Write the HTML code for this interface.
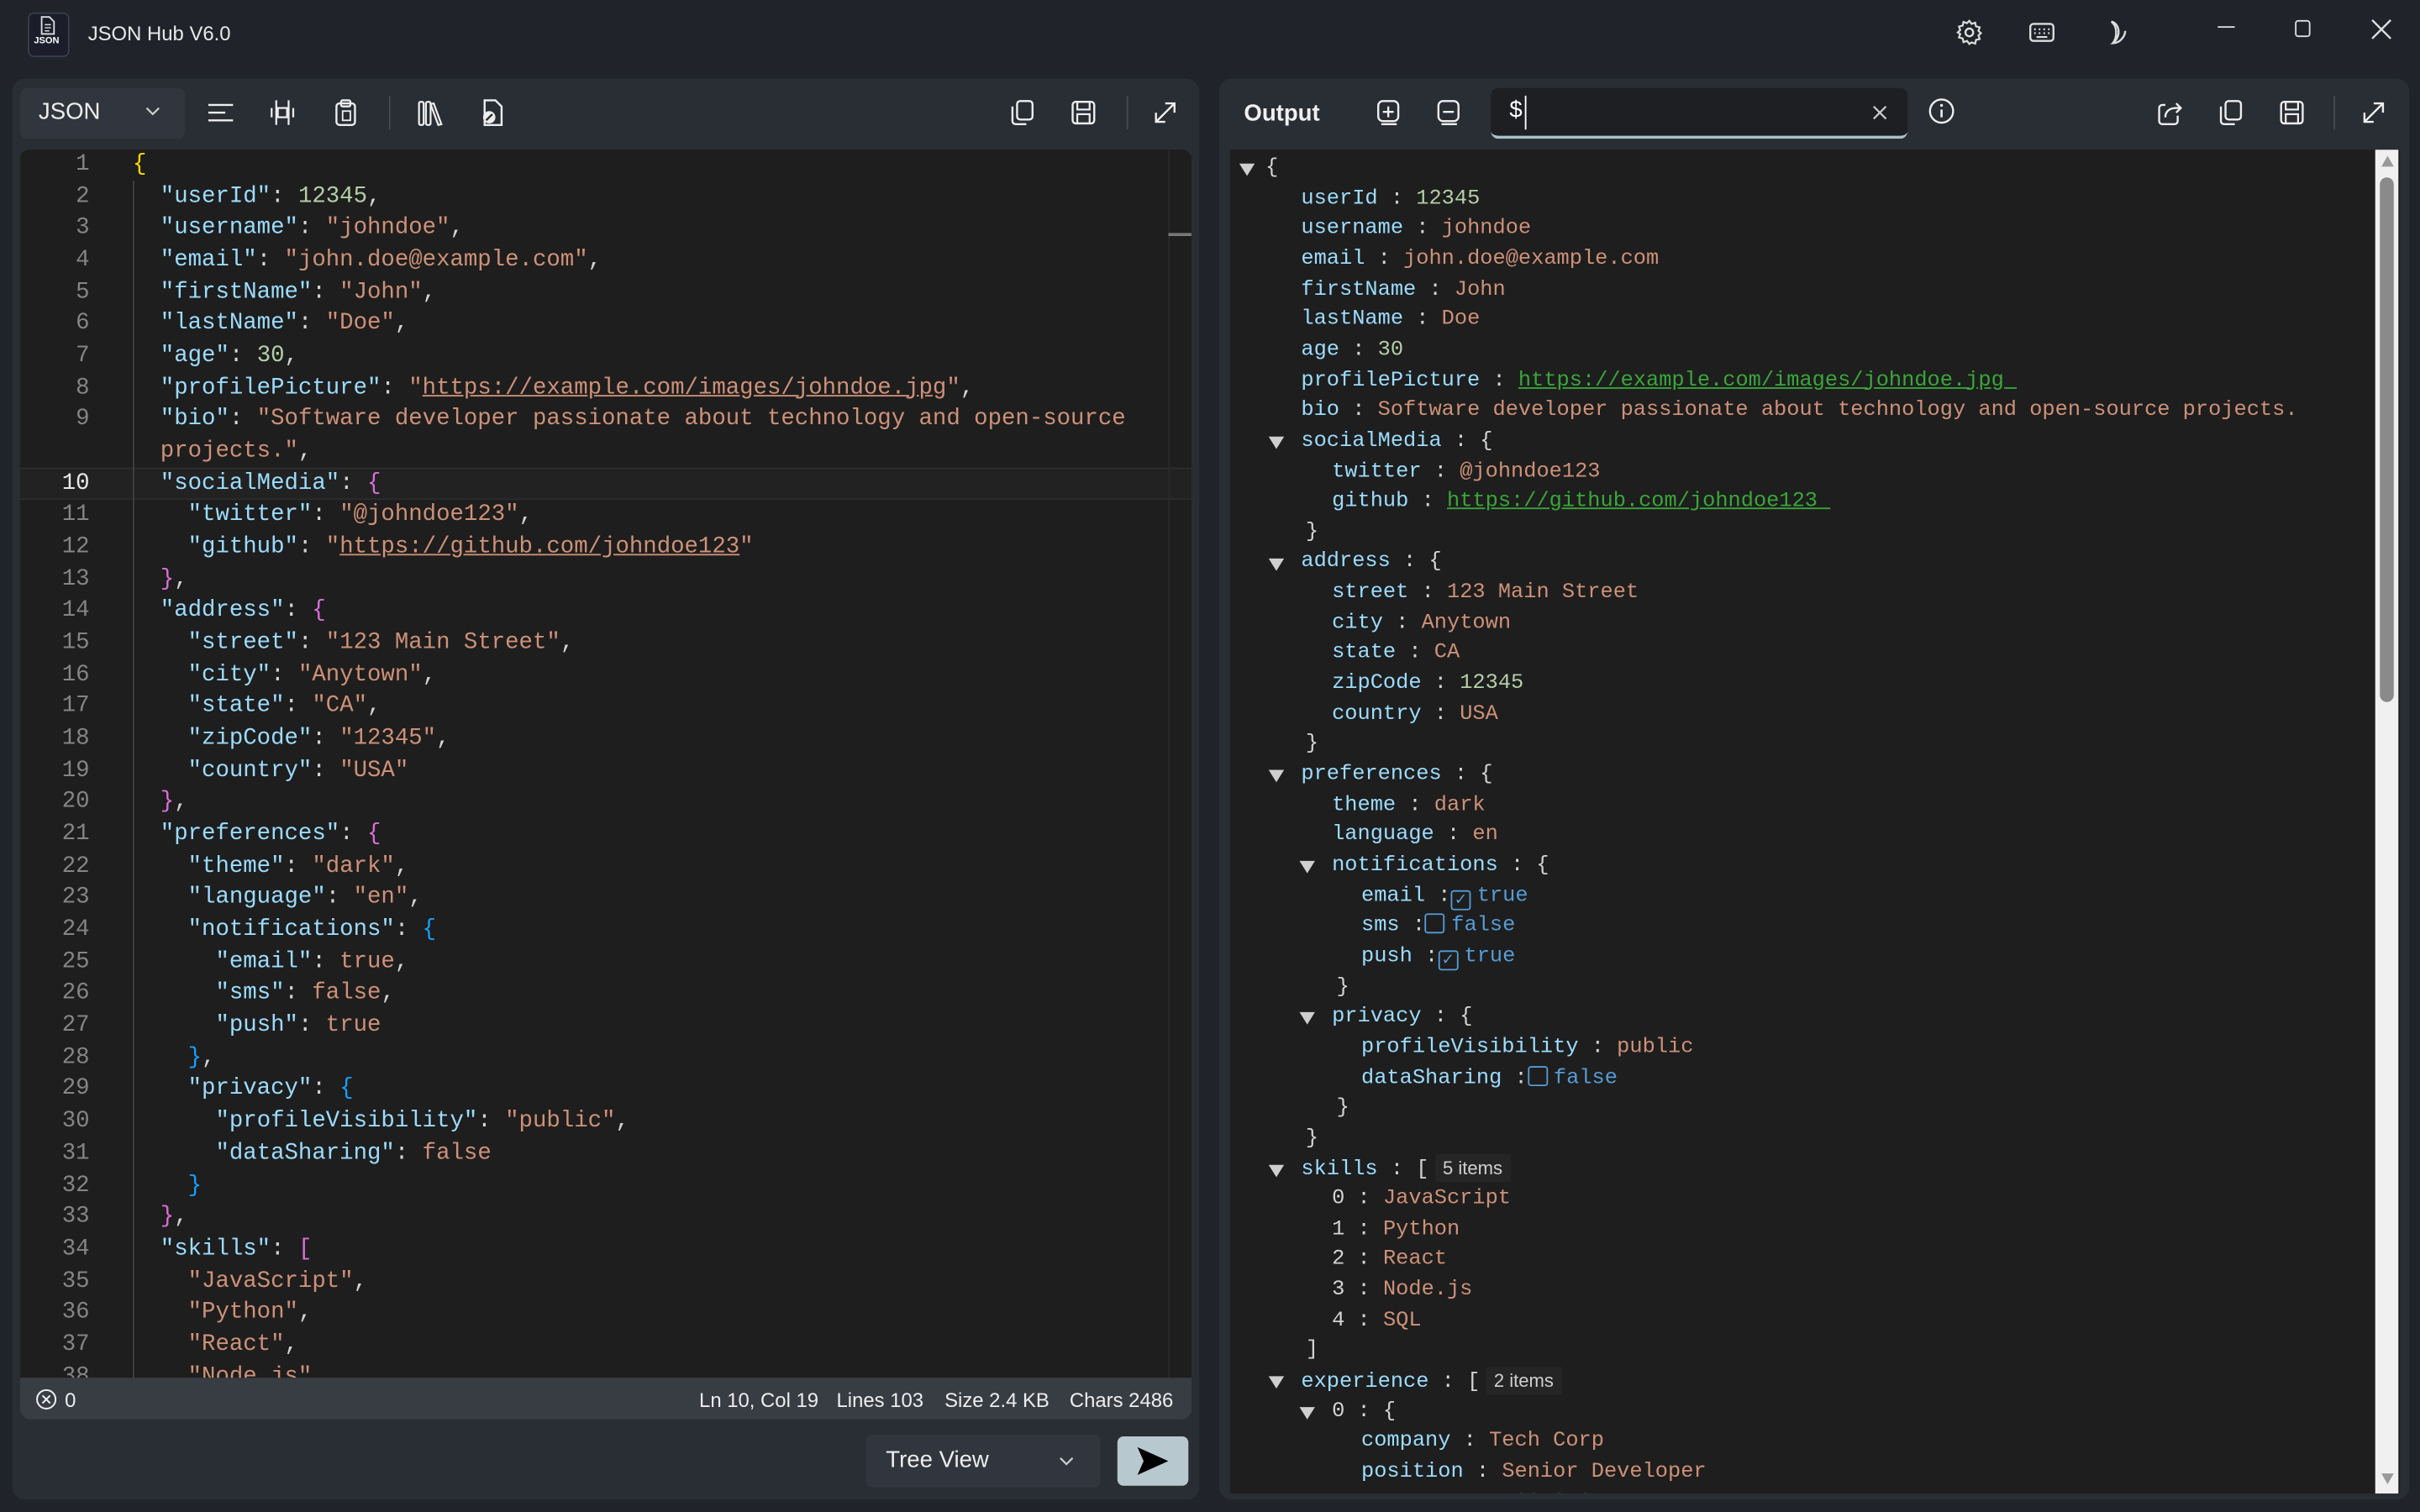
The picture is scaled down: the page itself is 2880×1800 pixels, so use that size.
<!DOCTYPE html>
<html><head><meta charset="utf-8">
<style>
html,body{margin:0;padding:0;background:#20242a;overflow:hidden;width:2880px;height:1800px}
#root{position:absolute;left:0;top:0;width:1568px;height:980px;transform:scale(1.836735);transform-origin:0 0;background:#20242a;font-family:"Liberation Sans",sans-serif;color:#e6e6e6}
.abs{position:absolute}
.ic{position:absolute;width:18px;height:18px}
.ic svg{width:18px;height:18px;display:block}
.panel{position:absolute;background:#292d34;border-radius:8px}
.code{position:absolute;left:13px;top:97px;width:759px;height:796px;background:#1e1e1e;overflow:hidden;border-radius:6px 6px 0 0}
.gut{position:absolute;left:0;top:0;width:45px;text-align:right;font-family:"Liberation Mono",monospace;font-size:14.9px;color:#858585}
.gut div,.src div{height:20.68px;line-height:20.68px;white-space:pre}
.src{position:absolute;left:73px;top:0;font-family:"Liberation Mono",monospace;font-size:14.9px;color:#d4d4d4}
.k{color:#9cdcfe}.s{color:#ce9178}.n{color:#b5cea8}.y{color:#ffd700}.m{color:#da70d6}.bl{color:#179fff}.u{text-decoration:underline}
.tree{position:absolute;left:797px;top:97px;width:758px;height:871px;background:#1e1e1e;overflow:hidden;font-family:"Liberation Mono",monospace;font-size:13.8px;color:#d4d4d4}
.tree .r{position:absolute;height:19.65px;line-height:19.65px;white-space:pre;margin-top:2px}
.tri{position:absolute;width:0;height:0;border-left:5px solid transparent;border-right:5px solid transparent;border-top:8px solid #cfcfcf;top:6px;margin-top:2px}
.tb{color:#569cd6}.tl{color:#3aa63a;text-decoration:underline}
.cb{display:inline-block;width:11px;height:11px;border:1.6px solid #569cd6;border-radius:2px;vertical-align:-2px;margin:0 4px 0 0;position:relative;font-size:10px;line-height:11px;text-align:center;color:#569cd6;font-family:"DejaVu Sans",sans-serif}
.badge{display:inline-block;background:#252525;font-family:"Liberation Sans",sans-serif;font-size:12px;padding:0 5px;margin-left:4px;line-height:18px;color:#d0d0d0}
</style></head><body><div id="root">

<div class="abs" style="left:18px;top:8px;width:25px;height:27px;background:#1b1d2b;border-radius:4px;border:1px solid #3a3d4a"></div>
<svg class="abs" style="left:22px;top:10px" width="17" height="13" viewBox="0 0 17 13"><path d="M5 1h5l3 3v8H5z" fill="none" stroke="#ddd" stroke-width="1"/><path d="M7 6h4M7 8h4M7 10h3" stroke="#ddd" stroke-width="0.8"/></svg>
<div class="abs" style="left:22px;top:24px;font-size:6px;color:#fff;font-weight:bold">JSON</div>
<div class="abs" style="left:57px;top:14px;font-size:13px;color:#e8e8e8">JSON Hub V6.0</div>

<div class="ic" style="left:1267px;top:12px"><svg viewBox="0 0 18 18"><circle cx="9" cy="9" r="2.5" fill="none" stroke="#ddd" stroke-width="1.3"/><path d="M9 1.5l1.5 2 2.3-.8.5 2.4 2.4.6-.8 2.3 1.6 1.5-1.6 1.5.8 2.3-2.4.6-.5 2.4-2.3-.8L9 16.5l-1.5-2-2.3.8-.5-2.4-2.4-.6.8-2.3L1.5 9l1.6-1.5-.8-2.3 2.4-.6.5-2.4 2.3.8z" fill="none" stroke="#ddd" stroke-width="1.2"/></svg></div>
<div class="ic" style="left:1314px;top:12px"><svg viewBox="0 0 18 18"><rect x="1.5" y="3.5" width="15" height="11" rx="2" fill="none" stroke="#ddd" stroke-width="1.3"/><path d="M4 7h1M7 7h1M10 7h1M13 7h1M4 9.5h1M7 9.5h1M10 9.5h1M13 9.5h1M5.5 12h7" stroke="#ddd" stroke-width="1.2"/></svg></div>
<div class="ic" style="left:1361px;top:12px"><svg viewBox="0 0 18 18"><path d="M7 2c5 1 7 9 1 14 5 0 8-5 8-8" fill="none" stroke="#ddd" stroke-width="1.3"/><path d="M7 2c4 3 4 10 1 14" fill="none" stroke="#ddd" stroke-width="1.3"/></svg></div>
<div class="abs" style="left:1437px;top:17px;width:11px;height:1.3px;background:#ddd"></div>
<div class="abs" style="left:1487px;top:13px;width:8px;height:9px;border:1.3px solid #ddd;border-radius:2px"></div>
<div class="ic" style="left:1534px;top:10px"><svg viewBox="0 0 18 18"><path d="M3 3l12 12M15 3L3 15" stroke="#ddd" stroke-width="1.3"/></svg></div>

<div class="panel" style="left:8px;top:51px;width:769px;height:921px"></div>
<div class="abs" style="left:13px;top:57px;width:107px;height:33px;background:#31363e;border-radius:5px"></div>
<div class="abs" style="left:25px;top:64px;font-size:15px;color:#eee">JSON</div>
<svg class="abs" style="left:94px;top:69px" width="10" height="7" viewBox="0 0 10 7"><path d="M1 1l4 4 4-4" fill="none" stroke="#ccc" stroke-width="1.2"/></svg>

<div class="ic" style="left:134px;top:64px"><svg viewBox="0 0 18 18"><path d="M1 4h16M1 9h11M1 14h16" stroke="#eee" stroke-width="1.3"/></svg></div>
<div class="ic" style="left:174px;top:64px"><svg viewBox="0 0 18 18"><path d="M5 1v16M13 1v16M2 6v6M16 6v6" stroke="#eee" stroke-width="1.2"/><rect x="6" y="6" width="6" height="6" fill="none" stroke="#eee" stroke-width="1.2"/></svg></div>
<div class="ic" style="left:215px;top:64px"><svg viewBox="0 0 18 18"><rect x="3" y="3" width="12" height="14" rx="2" fill="none" stroke="#eee" stroke-width="1.3"/><rect x="6" y="1" width="6" height="4" rx="1" fill="none" stroke="#eee" stroke-width="1.3"/><rect x="7" y="8" width="5" height="6" fill="none" stroke="#eee" stroke-width="1"/></svg></div>
<div class="abs" style="left:252px;top:62px;width:1px;height:22px;background:#444a52"></div>
<div class="ic" style="left:270px;top:64px"><svg viewBox="0 0 18 18"><rect x="1.5" y="2" width="3" height="15" rx="1" fill="none" stroke="#eee" stroke-width="1.2"/><rect x="6" y="2" width="3" height="15" rx="1" fill="none" stroke="#eee" stroke-width="1.2"/><path d="M11 3l5 13.5-2 .5-5-13.5z" fill="none" stroke="#eee" stroke-width="1.2"/></svg></div>
<div class="ic" style="left:310px;top:64px"><svg viewBox="0 0 18 18"><path d="M4 1h7l4 4v12H4z" fill="none" stroke="#eee" stroke-width="1.3"/><circle cx="7" cy="12" r="4" fill="#eee"/><path d="M5 14l4-4" stroke="#292d34" stroke-width="1.3"/></svg></div>

<div class="ic" style="left:653px;top:64px"><svg viewBox="0 0 18 18"><rect x="6" y="1.5" width="10" height="12" rx="2" fill="none" stroke="#eee" stroke-width="1.3"/><path d="M3 5v9.5a2 2 0 0 0 2 2h7" fill="none" stroke="#eee" stroke-width="1.3"/></svg></div>
<div class="ic" style="left:693px;top:64px"><svg viewBox="0 0 18 18"><rect x="2" y="2" width="14" height="14" rx="2" fill="none" stroke="#eee" stroke-width="1.3"/><rect x="5" y="2" width="8" height="5" fill="none" stroke="#eee" stroke-width="1.2"/><rect x="5" y="10" width="8" height="6" fill="none" stroke="#eee" stroke-width="1.2"/></svg></div>
<div class="abs" style="left:730px;top:62px;width:1px;height:22px;background:#444a52"></div>
<div class="ic" style="left:746px;top:64px"><svg viewBox="0 0 18 18"><path d="M3 15L15 3M9 3h6v6M3 9v6h6" fill="none" stroke="#eee" stroke-width="1.3"/></svg></div>

<div class="code">
<div class="abs" style="left:0;top:206px;width:759px;height:21px;background:#222;border-top:1px solid #2c2c2c;border-bottom:1px solid #2c2c2c;box-sizing:border-box"></div>
<div class="abs" style="left:73px;top:20px;width:1px;height:780px;background:#404040"></div>
<div class="abs" style="left:744px;top:0;width:1px;height:796px;background:#2a2a2a"></div>
<div class="abs" style="left:744px;top:54px;width:15px;height:2px;background:#777"></div>
<div class="gut">
<div>1</div><div>2</div><div>3</div><div>4</div><div>5</div><div>6</div><div>7</div><div>8</div><div>9</div><div> </div><div style="color:#e8e8e8">10</div><div>11</div><div>12</div><div>13</div><div>14</div><div>15</div><div>16</div><div>17</div><div>18</div><div>19</div><div>20</div><div>21</div><div>22</div><div>23</div><div>24</div><div>25</div><div>26</div><div>27</div><div>28</div><div>29</div><div>30</div><div>31</div><div>32</div><div>33</div><div>34</div><div>35</div><div>36</div><div>37</div><div>38</div>
</div>
<div class="src">
<div><span class="y">{</span></div>
<div>  <span class="k">"userId"</span>: <span class="n">12345</span>,</div>
<div>  <span class="k">"username"</span>: <span class="s">"johndoe"</span>,</div>
<div>  <span class="k">"email"</span>: <span class="s">"john.doe@example.com"</span>,</div>
<div>  <span class="k">"firstName"</span>: <span class="s">"John"</span>,</div>
<div>  <span class="k">"lastName"</span>: <span class="s">"Doe"</span>,</div>
<div>  <span class="k">"age"</span>: <span class="n">30</span>,</div>
<div>  <span class="k">"profilePicture"</span>: <span class="s">"<span class="u">https://example.com/images/johndoe.jpg</span>"</span>,</div>
<div>  <span class="k">"bio"</span>: <span class="s">"Software developer passionate about technology and open-source</span></div>
<div>  <span class="s">projects."</span>,</div>
<div>  <span class="k">"socialMedia"</span>: <span class="m">{</span></div>
<div>    <span class="k">"twitter"</span>: <span class="s">"@johndoe123"</span>,</div>
<div>    <span class="k">"github"</span>: <span class="s">"<span class="u">https://github.com/johndoe123</span>"</span></div>
<div>  <span class="m">}</span>,</div>
<div>  <span class="k">"address"</span>: <span class="m">{</span></div>
<div>    <span class="k">"street"</span>: <span class="s">"123 Main Street"</span>,</div>
<div>    <span class="k">"city"</span>: <span class="s">"Anytown"</span>,</div>
<div>    <span class="k">"state"</span>: <span class="s">"CA"</span>,</div>
<div>    <span class="k">"zipCode"</span>: <span class="s">"12345"</span>,</div>
<div>    <span class="k">"country"</span>: <span class="s">"USA"</span></div>
<div>  <span class="m">}</span>,</div>
<div>  <span class="k">"preferences"</span>: <span class="m">{</span></div>
<div>    <span class="k">"theme"</span>: <span class="s">"dark"</span>,</div>
<div>    <span class="k">"language"</span>: <span class="s">"en"</span>,</div>
<div>    <span class="k">"notifications"</span>: <span class="bl">{</span></div>
<div>      <span class="k">"email"</span>: <span class="s">true</span>,</div>
<div>      <span class="k">"sms"</span>: <span class="s">false</span>,</div>
<div>      <span class="k">"push"</span>: <span class="s">true</span></div>
<div>    <span class="bl">}</span>,</div>
<div>    <span class="k">"privacy"</span>: <span class="bl">{</span></div>
<div>      <span class="k">"profileVisibility"</span>: <span class="s">"public"</span>,</div>
<div>      <span class="k">"dataSharing"</span>: <span class="s">false</span></div>
<div>    <span class="bl">}</span></div>
<div>  <span class="m">}</span>,</div>
<div>  <span class="k">"skills"</span>: <span class="m">[</span></div>
<div>    <span class="s">"JavaScript"</span>,</div>
<div>    <span class="s">"Python"</span>,</div>
<div>    <span class="s">"React"</span>,</div>
<div>    <span class="s">"Node.js"</span>,</div>
</div>
</div>
<div class="abs" style="left:13px;top:893px;width:759px;height:27px;background:#383c43;border-radius:0 0 7px 7px;font-size:13px;color:#eee">
<svg class="abs" style="left:10px;top:7px" width="14" height="14" viewBox="0 0 14 14"><circle cx="7" cy="7" r="6" fill="none" stroke="#eee" stroke-width="1.1"/><path d="M4.5 4.5l5 5M9.5 4.5l-5 5" stroke="#eee" stroke-width="1.1"/></svg>
<div class="abs" style="left:29px;top:7px">0</div>
<div class="abs" style="left:440px;top:7px">Ln 10, Col 19</div>
<div class="abs" style="left:529px;top:7px">Lines 103</div>
<div class="abs" style="left:599px;top:7px">Size 2.4 KB</div>
<div class="abs" style="left:680px;top:7px">Chars 2486</div>
</div>
<div class="abs" style="left:561px;top:930px;width:152px;height:34px;background:#31363e;border-radius:4px"></div>
<div class="abs" style="left:574px;top:938px;font-size:15px;color:#eee">Tree View</div>
<svg class="abs" style="left:686px;top:944px" width="10" height="7" viewBox="0 0 10 7"><path d="M1 1l4 4 4-4" fill="none" stroke="#ccc" stroke-width="1.2"/></svg>
<div class="abs" style="left:724px;top:931px;width:46px;height:32px;background:#b7c8ce;border-radius:4px"></div>
<svg class="abs" style="left:736px;top:937px" width="22" height="20" viewBox="0 0 22 20"><path d="M1 1l20 9-20 9 4-9z" fill="#000"/></svg>

<div class="panel" style="left:790px;top:51px;width:771px;height:921px"></div>
<div class="abs" style="left:806px;top:65px;font-size:15px;font-weight:bold;color:#f0f0f0">Output</div>
<div class="ic" style="left:891px;top:64px"><svg viewBox="0 0 18 18"><rect x="2" y="1.5" width="13" height="13" rx="3" fill="none" stroke="#eee" stroke-width="1.3"/><path d="M8.5 5v7M5 8.5h7M4 16.5h10" stroke="#eee" stroke-width="1.3"/></svg></div>
<div class="ic" style="left:930px;top:64px"><svg viewBox="0 0 18 18"><rect x="2" y="1.5" width="13" height="13" rx="3" fill="none" stroke="#eee" stroke-width="1.3"/><path d="M5 8.5h7M4 16.5h10" stroke="#eee" stroke-width="1.3"/></svg></div>
<div class="abs" style="left:966px;top:57px;width:270px;height:33px;background:#1d1f23;border-radius:5px;border-bottom:2.5px solid #a9c1c8;box-sizing:border-box"></div>
<div class="abs" style="left:978px;top:63px;font-size:15px;color:#fff">$</div>
<div class="abs" style="left:988px;top:62px;width:1px;height:22px;background:#fff"></div>
<div class="ic" style="left:1209px;top:64px"><svg viewBox="0 0 18 18"><path d="M5 5l8 8M13 5l-8 8" stroke="#ccc" stroke-width="1.2"/></svg></div>
<div class="ic" style="left:1249px;top:63px"><svg viewBox="0 0 18 18"><circle cx="9" cy="9" r="7.5" fill="none" stroke="#eee" stroke-width="1.3"/><path d="M9 8v5" stroke="#eee" stroke-width="1.4"/><circle cx="9" cy="5.3" r="0.9" fill="#eee"/></svg></div>
<div class="ic" style="left:1397px;top:64px"><svg viewBox="0 0 18 18"><path d="M14 11v3.5a2 2 0 0 1-2 2H4a2 2 0 0 1-2-2V6a2 2 0 0 1 2-2h2" fill="none" stroke="#eee" stroke-width="1.3"/><path d="M6 12c0-4 3-6 7-6h3M13 3l3 3-3 3" fill="none" stroke="#eee" stroke-width="1.3"/></svg></div>
<div class="ic" style="left:1436px;top:64px"><svg viewBox="0 0 18 18"><rect x="6" y="1.5" width="10" height="12" rx="2" fill="none" stroke="#eee" stroke-width="1.3"/><path d="M3 5v9.5a2 2 0 0 0 2 2h7" fill="none" stroke="#eee" stroke-width="1.3"/></svg></div>
<div class="ic" style="left:1476px;top:64px"><svg viewBox="0 0 18 18"><rect x="2" y="2" width="14" height="14" rx="2" fill="none" stroke="#eee" stroke-width="1.3"/><rect x="5" y="2" width="8" height="5" fill="none" stroke="#eee" stroke-width="1.2"/><rect x="5" y="10" width="8" height="6" fill="none" stroke="#eee" stroke-width="1.2"/></svg></div>
<div class="abs" style="left:1512px;top:62px;width:1px;height:22px;background:#444a52"></div>
<div class="ic" style="left:1529px;top:64px"><svg viewBox="0 0 18 18"><path d="M3 15L15 3M9 3h6v6M3 9v6h6" fill="none" stroke="#eee" stroke-width="1.3"/></svg></div>

<div class="tree">
<div class="abs" style="left:742px;top:0;width:15px;height:871px;background:#f0f0f0"></div>
<div class="abs" style="left:746px;top:4px;width:0;height:0;border-left:4px solid transparent;border-right:4px solid transparent;border-bottom:7px solid #999"></div>
<div class="abs" style="left:745px;top:18px;width:9px;height:340px;background:#8a8a8a;border-radius:5px"></div>
<div class="abs" style="left:746px;top:858px;width:0;height:0;border-left:4px solid transparent;border-right:4px solid transparent;border-top:7px solid #999"></div>

<div class="r" style="top:1px;left:23px">{</div><div class="tri" style="left:6px;top:7px"></div>
<div class="r" style="top:20.6px;left:46px"><span class="k">userId</span> : <span class="n">12345</span></div>
<div class="r" style="top:40.3px;left:46px"><span class="k">username</span> : <span class="s">johndoe</span></div>
<div class="r" style="top:59.9px;left:46px"><span class="k">email</span> : <span class="s">john.doe@example.com</span></div>
<div class="r" style="top:79.6px;left:46px"><span class="k">firstName</span> : <span class="s">John</span></div>
<div class="r" style="top:99.2px;left:46px"><span class="k">lastName</span> : <span class="s">Doe</span></div>
<div class="r" style="top:118.9px;left:46px"><span class="k">age</span> : <span class="n">30</span></div>
<div class="r" style="top:138.5px;left:46px"><span class="k">profilePicture</span> : <span class="tl">https://example.com/images/johndoe.jpg </span></div>
<div class="r" style="top:158.2px;left:46px"><span class="k">bio</span> : <span class="s">Software developer passionate about technology and open-source projects.</span></div>
<div class="tri" style="left:25px;top:184px"></div><div class="r" style="top:177.8px;left:46px"><span class="k">socialMedia</span> : {</div>
<div class="r" style="top:197.5px;left:66px"><span class="k">twitter</span> : <span class="s">@johndoe123</span></div>
<div class="r" style="top:217.1px;left:66px"><span class="k">github</span> : <span class="tl">https://github.com/johndoe123 </span></div>
<div class="r" style="top:236.8px;left:49px">}</div>
<div class="tri" style="left:25px;top:262.5px"></div><div class="r" style="top:256.4px;left:46px"><span class="k">address</span> : {</div>
<div class="r" style="top:276.1px;left:66px"><span class="k">street</span> : <span class="s">123 Main Street</span></div>
<div class="r" style="top:295.7px;left:66px"><span class="k">city</span> : <span class="s">Anytown</span></div>
<div class="r" style="top:315.4px;left:66px"><span class="k">state</span> : <span class="s">CA</span></div>
<div class="r" style="top:335px;left:66px"><span class="k">zipCode</span> : <span class="n">12345</span></div>
<div class="r" style="top:354.7px;left:66px"><span class="k">country</span> : <span class="s">USA</span></div>
<div class="r" style="top:374.3px;left:49px">}</div>
<div class="tri" style="left:25px;top:400px"></div><div class="r" style="top:394px;left:46px"><span class="k">preferences</span> : {</div>
<div class="r" style="top:413.6px;left:66px"><span class="k">theme</span> : <span class="s">dark</span></div>
<div class="r" style="top:433.3px;left:66px"><span class="k">language</span> : <span class="s">en</span></div>
<div class="tri" style="left:45px;top:459px"></div><div class="r" style="top:452.9px;left:66px"><span class="k">notifications</span> : {</div>
<div class="r" style="top:472.6px;left:85px"><span class="k">email</span> :<span class="cb">✓</span><span class="tb">true</span></div>
<div class="r" style="top:492.2px;left:85px"><span class="k">sms</span> :<span class="cb"></span><span class="tb">false</span></div>
<div class="r" style="top:511.9px;left:85px"><span class="k">push</span> :<span class="cb">✓</span><span class="tb">true</span></div>
<div class="r" style="top:531.5px;left:69px">}</div>
<div class="tri" style="left:45px;top:557px"></div><div class="r" style="top:551.2px;left:66px"><span class="k">privacy</span> : {</div>
<div class="r" style="top:570.8px;left:85px"><span class="k">profileVisibility</span> : <span class="s">public</span></div>
<div class="r" style="top:590.5px;left:85px"><span class="k">dataSharing</span> :<span class="cb"></span><span class="tb">false</span></div>
<div class="r" style="top:610.1px;left:69px">}</div>
<div class="r" style="top:629.8px;left:49px">}</div>
<div class="tri" style="left:25px;top:655.5px"></div><div class="r" style="top:649.4px;left:46px"><span class="k">skills</span> : [<span class="badge">5 items</span></div>
<div class="r" style="top:669.1px;left:66px"><span>0</span> : <span class="s">JavaScript</span></div>
<div class="r" style="top:688.7px;left:66px"><span>1</span> : <span class="s">Python</span></div>
<div class="r" style="top:708.4px;left:66px"><span>2</span> : <span class="s">React</span></div>
<div class="r" style="top:728px;left:66px"><span>3</span> : <span class="s">Node.js</span></div>
<div class="r" style="top:747.7px;left:66px"><span>4</span> : <span class="s">SQL</span></div>
<div class="r" style="top:767.3px;left:49px">]</div>
<div class="tri" style="left:25px;top:793px"></div><div class="r" style="top:787px;left:46px"><span class="k">experience</span> : [<span class="badge">2 items</span></div>
<div class="tri" style="left:45px;top:812.6px"></div><div class="r" style="top:806.6px;left:66px">0 : {</div>
<div class="r" style="top:826.3px;left:85px"><span class="k">company</span> : <span class="s">Tech Corp</span></div>
<div class="r" style="top:845.9px;left:85px"><span class="k">position</span> : <span class="s">Senior Developer</span></div>
<div class="r" style="top:865.6px;left:85px"><span class="k">startDate</span> : <span class="s">2018-01-15</span></div>
</div>

</div></body></html>
